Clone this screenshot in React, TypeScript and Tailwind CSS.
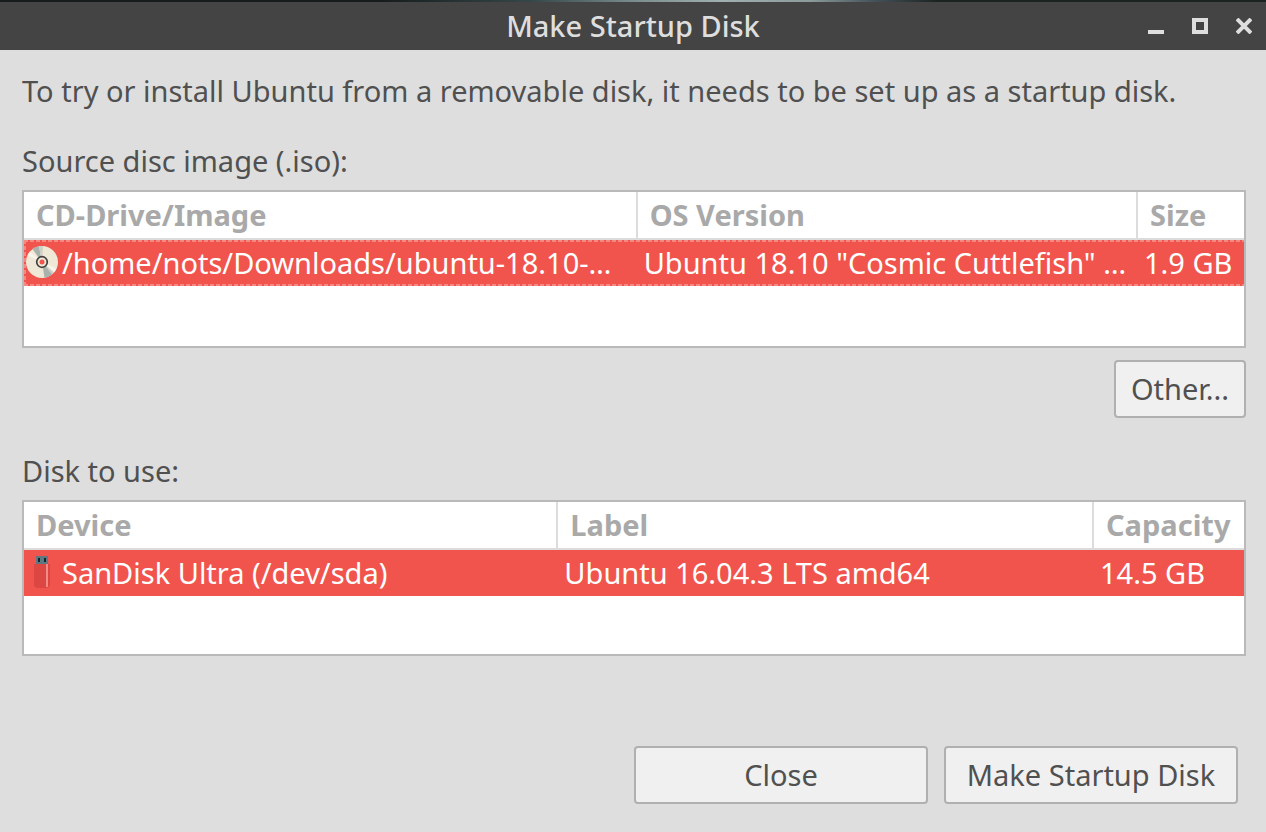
import type { ReactNode } from 'react';

function DiscIcon() {
  return (
    <svg className="mb-0.5 size-8 shrink-0" viewBox="0 0 32 32" aria-hidden="true">
      <circle cx="16" cy="16" r="16" fill="#efe8d6" />
      <path d="M16 16 L4 5.500 A16 16 0 0 0 1.500 9.500 Z" fill="#f8f4ea" />
      <path d="M16 16 L6.500 3.100 A16 16 0 0 1 13 0.300 Z" fill="#a9b2ad" />
      <path d="M16 16 L13 0.300 A16 16 0 0 1 17 0 Z" fill="#cdd0c6" />
      <path d="M16 16 L28 26.500 A16 16 0 0 0 30.500 22.500 Z" fill="#f8f4ea" />
      <path d="M16 16 L28 26.500 A16 16 0 0 1 25 29 Z" fill="#cdd0c6" />
      <path d="M16 16 L26 28.500 A16 16 0 0 1 18.500 31.800 Z" fill="#a9b2ad" />
      <circle cx="16" cy="16" r="5.300" fill="#efe8d6" stroke="#3f3f3f" strokeWidth="1.700" />
      <circle cx="16" cy="16" r="2.500" fill="#f1544d" />
    </svg>
  );
}

function UsbIcon() {
  return (
    <svg className="mb-0.5 size-8 shrink-0" viewBox="0 0 32 32" aria-hidden="true">
      <rect x="10" y="0" width="12" height="8" fill="#5f7780" />
      <rect x="12" y="2" width="2" height="4" fill="#10262e" />
      <rect x="18" y="2" width="2" height="4" fill="#10262e" />
      <path d="M8 8h16v20a4 4 0 0 1-4 4h-8a4 4 0 0 1-4-4z" fill="#dd4743" />
      <rect x="20" y="8" width="2" height="23" fill="#f28c88" />
    </svg>
  );
}

type ListProps = {
  id: string;
  label: string;
  headers: string[];
  cells: string[];
  icon: ReactNode;
  firstCol: string;
  lastCol: string;
  height: string;
  focused?: boolean;
};

function DeviceList({ id, label, headers, cells, icon, firstCol, lastCol, height, focused }: ListProps) {
  return (
    <section>
      <h2 id={id} className="mb-[9px] leading-10">{label}</h2>
      <div className={`${height} border-2 border-[#b9b9b9] bg-white`}>
        <table aria-labelledby={id} className="w-full table-fixed border-separate border-spacing-0">
          <colgroup>
            <col className={firstCol} />
            <col />
            <col className={lastCol} />
          </colgroup>
          <thead>
            <tr className="h-12 text-left text-[#a9a9a9]">
              {headers.map((h) => (
                <th key={h} className="border-r-2 border-b-2 border-[#dcdcdc] p-0 pl-3 leading-10 font-bold whitespace-nowrap last:border-r-0">
                  {h}
                </th>
              ))}
            </tr>
          </thead>
          <tbody>
            <tr
              aria-selected="true"
              className={
                focused
                  ? 'h-[46px] bg-[#f1544d] bg-[image:repeating-linear-gradient(90deg,#f48983_0_4px,transparent_4px_6px),repeating-linear-gradient(90deg,#f48983_0_4px,transparent_4px_6px),repeating-linear-gradient(180deg,#f48983_0_4px,transparent_4px_6px)] bg-[position:0_0,0_100%,0_0] bg-[size:100%_2px,100%_2px,2px_100%] bg-no-repeat text-white'
                  : 'h-[46px] bg-[#f1544d] text-white'
              }
            >
              {cells.map((c, i) => (
                <td key={c} className={i === 0 ? 'p-0 pl-[2px]' : 'p-0 pl-[6px]'}>
                  <div className="flex items-center gap-1 leading-10 whitespace-nowrap">
                    {i === 0 && icon}
                    <span>{c}</span>
                  </div>
                </td>
              ))}
            </tr>
          </tbody>
        </table>
      </div>
    </section>
  );
}

const button = 'h-[58px] rounded border-2 border-[#b0b0b0] bg-[#f0f0f0] text-center whitespace-nowrap';

export default function App() {
  return (
    <div className="flex min-h-screen flex-col bg-[#dedede] font-['Noto_Sans',sans-serif] text-[29px] text-[#505050]">
      <div className="h-0.5 bg-[linear-gradient(90deg,#161c1b_0%,#161c1b_30%,#36474a_42%,#7b8c8e_50%,#a0b0b0_57%,#8b9c9b_64%,#44525a_69%,#1c2422_74%,#1c2422_100%)]" />
      <header className="grid h-12 grid-cols-[1fr_auto_1fr] items-center bg-[#444444] text-[#dedede]">
        <h1 className="col-start-2 leading-10 font-medium">Make Startup Disk</h1>
        <div className="mr-[14px] flex gap-7 justify-self-end">
          <button type="button" aria-label="Minimize">
            <svg className="size-4" viewBox="0 0 16 16"><rect y="12" width="16" height="4" fill="currentColor" /></svg>
          </button>
          <button type="button" aria-label="Maximize">
            <svg className="size-4" viewBox="0 0 16 16"><rect x="2" y="2" width="12" height="12" fill="none" stroke="currentColor" strokeWidth="4" /></svg>
          </button>
          <button type="button" aria-label="Close window">
            <svg className="size-4" viewBox="0 0 16 16"><path d="M1 1l14 14M15 1L1 15" stroke="currentColor" strokeWidth="4" /></svg>
          </button>
        </div>
      </header>
      <main className="flex flex-1 flex-col pt-[21px] pr-5 pb-7 pl-[22px]">
        <p className="mb-[30px] leading-10">To try or install Ubuntu from a removable disk, it needs to be set up as a startup disk.</p>
        <DeviceList
          id="source"
          label="Source disc image (.iso):"
          headers={['CD-Drive/Image', 'OS Version', 'Size']}
          cells={['/home/nots/Downloads/ubuntu-18.10-…', 'Ubuntu 18.10 "Cosmic Cuttlefish" …', '1.9 GB']}
          icon={<DiscIcon />}
          firstCol="w-[50.3%]"
          lastCol="w-[106px]"
          height="h-[158px]"
          focused
        />
        <button type="button" className={`${button} mt-3 mb-[33px] w-[132px] self-end`}>Other...</button>
        <DeviceList
          id="target"
          label="Disk to use:"
          headers={['Device', 'Label', 'Capacity']}
          cells={['SanDisk Ultra (/dev/sda)', 'Ubuntu 16.04.3 LTS amd64', '14.5 GB']}
          icon={<UsbIcon />}
          firstCol="w-[43.8%]"
          lastCol="w-[150px]"
          height="h-[156px]"
        />
        <div className="mt-auto mr-2 flex justify-end gap-4">
          <button type="button" className={`${button} w-[294px]`}>Close</button>
          <button type="button" className={`${button} w-[294px]`}>Make Startup Disk</button>
        </div>
      </main>
    </div>
  );
}
